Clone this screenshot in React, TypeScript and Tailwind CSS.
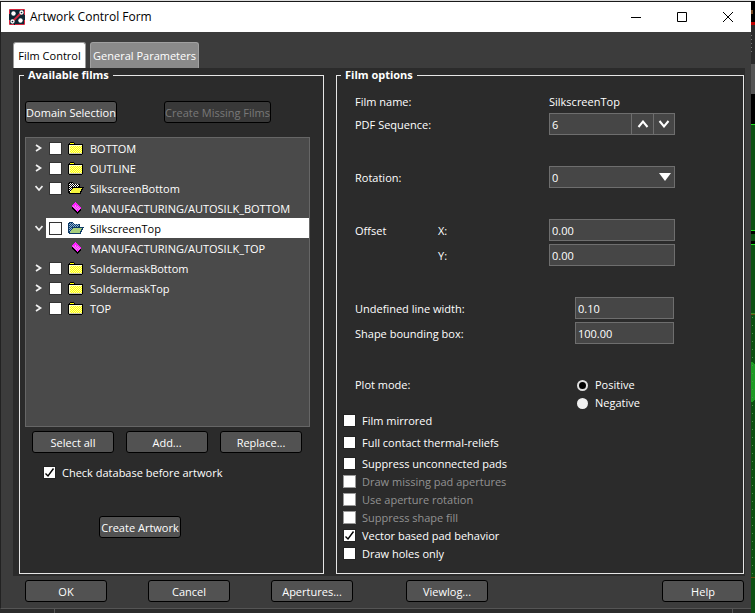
import React, { useState } from "react";

interface Film {
  name: string;
  open?: boolean;
  layers?: string[];
}

const films: Film[] = [
  { name: "BOTTOM" },
  { name: "OUTLINE" },
  { name: "SilkscreenBottom", open: true, layers: ["MANUFACTURING/AUTOSILK_BOTTOM"] },
  { name: "SilkscreenTop", open: true, layers: ["MANUFACTURING/AUTOSILK_TOP"] },
  { name: "SoldermaskBottom" },
  { name: "SoldermaskTop" },
  { name: "TOP" },
];

const fieldClass =
  "h-[22px] border border-[#6e6e6e] bg-[#464646] px-[2px] text-white outline-none";

const AppIcon = () => (
  <svg width="16" height="16" viewBox="0 0 16 16">
    <rect width="16" height="16" rx="1" fill="#d3273e" />
    <path d="M1 1H15V6H16V11H15V15H6V16H5V15H1V11H0V5H1Z" fill="#0f2733" />
    <path d="M4.500 11.500 11.500 4.500" stroke="#d3273e" strokeWidth="1.8" />
    <circle cx="4.500" cy="4.500" r="2.200" fill="#fff" />
    <circle cx="11.500" cy="11.500" r="2.200" fill="#fff" />
    <circle cx="12.500" cy="3.500" r="1.500" fill="#0f2733" stroke="#fff" strokeWidth="1.3" />
    <circle cx="3.500" cy="12.500" r="1.500" fill="#0f2733" stroke="#fff" strokeWidth="1.3" />
  </svg>
);

const Chevron = ({ open }: { open?: boolean }) => (
  <svg width="8" height="8" viewBox="0 0 8 8" fill="none" stroke="#f0f0f0" strokeWidth="1.7">
    {open ? <path d="M0.500 2 4 6 7.500 2" /> : <path d="M1 1 5.500 4 1 7" />}
  </svg>
);

const ClosedFolder = () => (
  <svg width="16" height="13" viewBox="0 0 16 13" shapeRendering="crispEdges">
    <path d="M0 2H1V1H2V0H6V1H7V2H15V12H14V13H1V12H0Z" fill="#000" />
    <path d="M2 1H6V2H2Z" fill="#ffff00" />
    <path d="M1 3H14V11H1Z" fill="#ffff00" />
    {[4, 5, 6, 7, 8, 9, 10].map((y) => (
      <path key={y} d={`M${2 + (y % 2)} ${y + 0.5}H14`} stroke="#ffffa0" strokeDasharray="1 1" />
    ))}
    <path d="M1 3H14V4H2V11H1Z" fill="#ffffd0" />
    <path d="M1 11H14V12H1Z" fill="#c8c8b0" />
  </svg>
);

const OpenFolder = ({ selected }: { selected?: boolean }) => {
  const line = selected ? "#0d3a66" : "#000";
  const back = selected ? "#8fb4d8" : "#fff";
  const front = selected ? "#a8cf7c" : "#f5f53c";
  return (
    <svg width="16" height="13" viewBox="0 0 16 13" shapeRendering="crispEdges">
      <path d="M0 1H1V0H5V1H6V2H12V5H16V6H15V8H14V10H13V12H1V11H0Z" fill={line} />
      {[1, 2, 3, 4, 5, 6, 7, 8, 9].map((y) => (
        <path
          key={y}
          d={`M${1 + (y % 2)} ${y + 0.5}H${y < 2 ? 5 : y < 5 ? 11 : 4}`}
          stroke={back}
          strokeDasharray="1 1"
        />
      ))}
      <path d="M5 6H14V7H13V9H12V11H2V10H3V8H4V7H5Z" fill={front} />
    </svg>
  );
};

const Diamond = () => (
  <svg width="11" height="12" viewBox="0 0 11 12" shapeRendering="crispEdges">
    <path d="M1 5 5 1 10 6V8L6 12 1 7Z" fill="#000" />
    <path d="M0 4 4 0 10 6 6 10Z" fill="#ff20ff" />
    <path d="M2 4.500H7M3 5.500H8M4 3.500H6M4 6.500H9M5 7.500H8" stroke="#f890f8" strokeDasharray="1 1" />
  </svg>
);

interface CheckProps {
  label: string;
  defaultChecked?: boolean;
  disabled?: boolean;
}

const Check: React.FC<CheckProps> = ({ label, defaultChecked, disabled }) => (
  <label
    className={`flex h-[18px] items-center gap-[6px] ${disabled ? "text-[#929292]" : ""}`}
  >
    <span className="grid pb-px">
      <input
        type="checkbox"
        defaultChecked={defaultChecked}
        disabled={disabled}
        className="peer col-start-1 row-start-1 size-[13px] appearance-none border border-[#222] bg-white disabled:border-[#999]"
      />
      <svg
        width="13"
        height="13"
        viewBox="0 0 13 13"
        className="pointer-events-none invisible col-start-1 row-start-1 peer-checked:visible"
      >
        <path d="M2.500 7.500 5 10 10.500 2.500" fill="none" stroke="#000" strokeWidth="1.4" />
      </svg>
    </span>
    {label}
  </label>
);

interface ButtonProps {
  children: React.ReactNode;
  className?: string;
  disabled?: boolean;
}

const Button: React.FC<ButtonProps> = ({ children, className = "w-[82px]", disabled }) => (
  <button
    type="button"
    disabled={disabled}
    className={`h-[22px] shrink-0 rounded-[3px] border border-black pt-[2px] whitespace-nowrap ${
      disabled ? "bg-[#383838] text-[#787878]" : "bg-[#525252]"
    } ${className}`}
  >
    {children}
  </button>
);

interface GroupProps {
  title: string;
  className: string;
  children: React.ReactNode;
}

const Group: React.FC<GroupProps> = ({ title, className, children }) => (
  <fieldset className={`border border-[#e6e6e6] ${className}`}>
    <legend className="ml-1 px-1 leading-[14px] font-bold">{title}</legend>
    {children}
  </fieldset>
);

const FilmTree = () => {
  const [selected, setSelected] = useState("SilkscreenTop");
  return (
    <ul className="mt-[14px] h-[290px] border border-[#666] bg-[#4a4a4a]">
      {films.map((film) => {
        const active = film.name === selected;
        return (
          <li key={film.name}>
            <div className="flex h-5 items-center pl-[9px]">
              <span className="w-[11px]">
                <Chevron open={film.open} />
              </span>
              <div
                onClick={() => setSelected(film.name)}
                className={`flex h-5 flex-1 items-center pl-[3px] ${active ? "bg-white text-black" : ""}`}
              >
                <input
                  type="checkbox"
                  aria-label={film.name}
                  className="size-[13px] appearance-none border border-[#333] bg-white"
                />
                <span className="mx-[6px]">
                  {film.open ? <OpenFolder selected={active} /> : <ClosedFolder />}
                </span>
                <span className="pt-[2px]">{film.name}</span>
              </div>
            </div>
            {film.layers?.map((layer) => (
              <div key={layer} className="flex h-5 items-center gap-[9px] pl-[45px]">
                <Diamond />
                <span className="pt-[2px]">{layer}</span>
              </div>
            ))}
          </li>
        );
      })}
    </ul>
  );
};

interface RowProps {
  id?: string;
  label: string;
  sub?: string;
  className?: string;
  children: React.ReactNode;
}

const Row: React.FC<RowProps> = ({ id, label, sub, className = "", children }) => (
  <div className={`flex h-[22px] items-center pl-3 ${className}`}>
    <label htmlFor={id} className="flex w-[194px] shrink-0 pt-[2px]">
      <span className={sub ? "w-[83px]" : ""}>{label}</span>
      {sub}
    </label>
    {children}
  </div>
);

const Radio = ({ label, defaultChecked }: { label: string; defaultChecked?: boolean }) => (
  <label className="flex h-[18px] items-center gap-[7px]">
    <input
      type="radio"
      name="plotMode"
      defaultChecked={defaultChecked}
      className="size-[11px] appearance-none rounded-full bg-[#f0f0f0] checked:border-2 checked:border-[#e0e0e0] checked:bg-black"
    />
    {label}
  </label>
);

const FilmOptions = () => {
  const [sequence, setSequence] = useState(6);
  return (
    <Group title="Film options" className="min-w-0 flex-1">
      <div className="pt-2 pb-[10px] pl-[6px]">
        <Row label="Film name:">
          <span className="pt-[2px]">SilkscreenTop</span>
        </Row>
        <Row id="sequence" label="PDF Sequence:" className="mt-px">
          <div className="flex h-[22px] w-[126px] border border-[#6e6e6e] bg-[#464646]">
            <input
              id="sequence"
              value={sequence}
              onChange={(e) => setSequence(Number(e.target.value) || 0)}
              className="w-0 flex-1 px-[2px] pt-[2px] outline-none"
            />
            <button
              type="button"
              aria-label="Increase"
              onClick={() => setSequence(sequence + 1)}
              className="grid w-[22px] place-items-center border-l border-[#6e6e6e]"
            >
              <svg width="12" height="8" viewBox="0 0 12 8" fill="none" stroke="#fff" strokeWidth="2">
                <path d="M1.500 7 6 1.500 10.500 7" />
              </svg>
            </button>
            <button
              type="button"
              aria-label="Decrease"
              onClick={() => setSequence(sequence - 1)}
              className="grid w-[21px] place-items-center border-l border-[#6e6e6e]"
            >
              <svg width="12" height="8" viewBox="0 0 12 8" fill="none" stroke="#fff" strokeWidth="2">
                <path d="M1.500 1 6 6.500 10.500 1" />
              </svg>
            </button>
          </div>
        </Row>
        <Row id="rotation" label="Rotation:" className="mt-[31px]">
          <div className="grid w-[126px] items-center">
            <select
              id="rotation"
              className={`col-start-1 row-start-1 appearance-none pt-[2px] ${fieldClass}`}
            >
              <option>0</option>
              <option>90</option>
              <option>180</option>
              <option>270</option>
            </select>
            <svg
              width="12"
              height="8"
              viewBox="0 0 12 8"
              className="pointer-events-none col-start-1 row-start-1 mr-1 justify-self-end"
            >
              <path d="M0 0H12L6 8Z" fill="#fff" />
            </svg>
          </div>
        </Row>
        <Row id="offsetX" label="Offset" sub="X:" className="mt-[31px]">
          <input id="offsetX" defaultValue="0.00" className={`w-[126px] ${fieldClass}`} />
        </Row>
        <Row id="offsetY" label="" sub="Y:" className="mt-[3px]">
          <input id="offsetY" defaultValue="0.00" className={`w-[126px] ${fieldClass}`} />
        </Row>
        <Row id="lineWidth" label="Undefined line width:" className="mt-[31px]">
          <input id="lineWidth" defaultValue="0.10" className={`ml-[26px] w-[99px] ${fieldClass}`} />
        </Row>
        <Row id="boundingBox" label="Shape bounding box:" className="mt-[3px]">
          <input id="boundingBox" defaultValue="100.00" className={`ml-[26px] w-[99px] ${fieldClass}`} />
        </Row>
        <div className="mt-8 flex pl-3" role="radiogroup" aria-label="Plot mode">
          <span className="w-[222px] leading-[18px]">Plot mode:</span>
          <div>
            <Radio label="Positive" defaultChecked />
            <Radio label="Negative" />
          </div>
        </div>
        <Check label="Film mirrored" />
        <div className="mt-1 mb-[3px]">
          <Check label="Full contact thermal-reliefs" />
        </div>
        <Check label="Suppress unconnected pads" />
        <Check label="Draw missing pad apertures" disabled />
        <Check label="Use aperture rotation" disabled />
        <Check label="Suppress shape fill" disabled />
        <Check label="Vector based pad behavior" defaultChecked />
        <Check label="Draw holes only" />
      </div>
    </Group>
  );
};

// Sliver of the board editor that shows beside the dialog
const BoardEdge = () => (
  <svg width="4" height="613" viewBox="0 0 4 613" className="shrink-0" shapeRendering="crispEdges">
    <rect width="4" height="613" fill="#0c4f12" />
    <rect width="4" height="22" fill="#000" />
    <rect width="4" height="1" fill="#ddd" />
    <rect y="10" width="2" height="4" fill="#7a4a22" />
    <rect y="22" width="4" height="3" fill="#c00000" />
    <rect y="25" width="4" height="39" fill="#2b2b2b" />
    <path d="M0.500 35V55" stroke="#777" strokeDasharray="1 3" />
    <rect y="64" width="4" height="30" fill="#555" />
    <rect y="94" width="4" height="30" fill="#000" />
    <rect y="124" width="4" height="1" fill="#1fe01f" />
    <rect y="230" width="4" height="1" fill="#1fe01f" />
    <rect y="231" width="4" height="3" fill="#000" />
    <rect y="241" width="4" height="3" fill="#000" />
    <rect y="244" width="4" height="1" fill="#1fe01f" />
    <rect y="313" width="4" height="1" fill="#3a8a2a" />
    <rect y="314" width="4" height="1" fill="#6b4a12" />
    <path d="M0 362Q4 362 4 366V398Q4 402 0 402Z" fill="#1d9a24" />
    <path d="M1.500 317V575" stroke="#4a8a4c" strokeDasharray="1 7" />
    <rect y="577" width="4" height="1" fill="#6b4a12" />
  </svg>
);

export default function App() {
  return (
    <div className="flex min-h-screen bg-[#2b2b2b] font-['Open_Sans','Noto_Sans',sans-serif] text-[11px] leading-[14px] text-white">
      <div className="min-w-0 flex-1">
        <div className="border-t border-b border-t-[#ddd] border-b-[#1a1a1a]" />
        <div className="border-b border-l border-b-[#555] border-l-[#222] bg-[#3c3c3c]">
          <header className="flex h-[30px] items-center bg-white pl-2 text-black">
            <AppIcon />
            <h1 className="ml-[5px] flex-1 text-xs">Artwork Control Form</h1>
            <button type="button" aria-label="Minimize" className="grid h-full w-[46px] place-items-center">
              <svg width="10" height="10" viewBox="0 0 10 10" stroke="#000">
                <path d="M0 5.500H10" />
              </svg>
            </button>
            <button type="button" aria-label="Maximize" className="grid h-full w-[46px] place-items-center">
              <svg width="10" height="10" viewBox="0 0 10 10" fill="none" stroke="#000">
                <path d="M.5 .5H9.500V9.500H.5Z" />
              </svg>
            </button>
            <button type="button" aria-label="Close" className="grid h-full w-[46px] place-items-center">
              <svg width="10" height="10" viewBox="0 0 10 10" stroke="#000">
                <path d="M0 0 10 10M10 0 0 10" />
              </svg>
            </button>
          </header>

          <div className="flex gap-1 px-3 pt-[10px]" role="tablist">
            <button
              type="button"
              role="tab"
              aria-selected="true"
              className="h-[26px] w-[73px] rounded-t-[3px] border border-b-0 border-[#999] bg-white whitespace-nowrap text-black"
            >
              Film Control
            </button>
            <button
              type="button"
              role="tab"
              aria-selected="false"
              className="h-[26px] w-[109px] rounded-t-[3px] border border-b-0 border-[#a0a0a0] bg-[#8a8a8a] whitespace-nowrap"
            >
              General Parameters
            </button>
          </div>

          <main className="mr-[6px] ml-3 flex gap-3 bg-[#2b2b2b] pr-px pb-[2px] pl-[6px]">
            <Group title="Available films" className="w-[305px] shrink-0">
              <div className="pt-[19px] pr-[13px] pl-[5px]">
                <div className="flex gap-[47px]">
                  <Button className="w-[92px]">Domain Selection</Button>
                  <Button className="w-[107px]" disabled>
                    Create Missing Films
                  </Button>
                </div>
                <FilmTree />
                <div className="mt-1 flex gap-3 pl-[7px]">
                  <Button>Select all</Button>
                  <Button>Add...</Button>
                  <Button>Replace...</Button>
                </div>
                <div className="mt-[11px] pl-[18px]">
                  <Check label="Check database before artwork" defaultChecked />
                </div>
                <div className="mt-[34px] pl-[74px]">
                  <Button>Create Artwork</Button>
                </div>
              </div>
            </Group>
            <FilmOptions />
          </main>

          <footer className="flex gap-[41px] pt-1 pr-[7px] pb-[6px] pl-6">
            <Button>OK</Button>
            <Button>Cancel</Button>
            <Button>Apertures...</Button>
            <Button className="ml-3 w-[82px]">Viewlog...</Button>
            <Button className="ml-auto w-[82px]">Help</Button>
          </footer>
        </div>
        <div className="flex h-1 justify-between pr-[18px] pl-[54px]">
          <span className="w-px bg-[#555]" />
          <span className="w-px bg-[#555]" />
        </div>
      </div>
      <BoardEdge />
    </div>
  );
}
